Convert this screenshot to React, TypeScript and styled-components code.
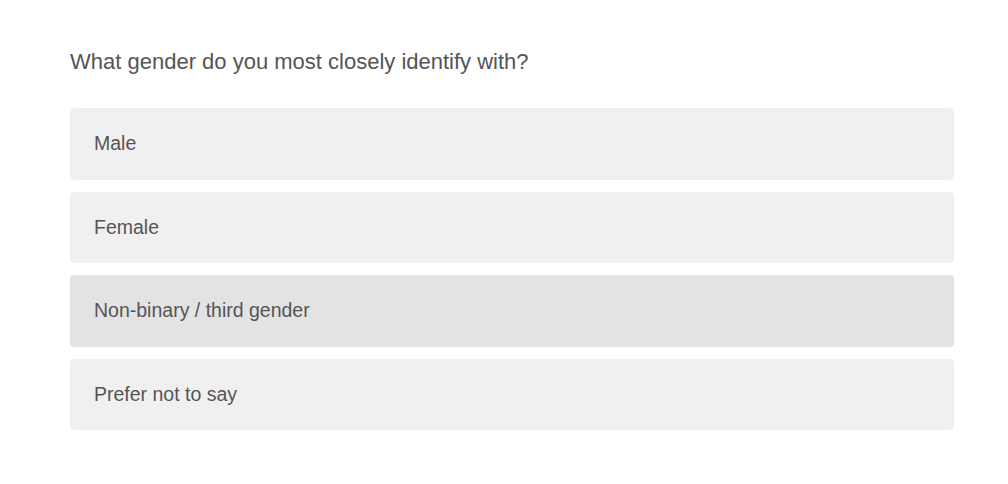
import styled, { createGlobalStyle } from 'styled-components'

const GlobalStyle = createGlobalStyle`
  body {
    margin: 0;
    background: #ffffff;
    font-family: 'Liberation Sans', Arial, Helvetica, sans-serif;
  }
`

const Page = styled.div`
  padding: 47px 54px 0 70px;
`

const Question = styled.div`
  font-size: 22px;
  line-height: 30px;
  color: #555555;
  margin-bottom: 31px;
`

const OptionList = styled.div`
  display: flex;
  flex-direction: column;
  gap: 12px;
`

const Option = styled.div<{ $hover?: boolean }>`
  height: 71.5px;
  display: flex;
  align-items: center;
  padding: 0 24px;
  border-radius: 4px;
  background-color: ${(p) => (p.$hover ? '#e3e3e3' : '#f0f0f0')};
  font-size: 19.5px;
  color: #555555;
  cursor: pointer;
`

const options = ['Male', 'Female', 'Non-binary / third gender', 'Prefer not to say']

function App() {
  return (
    <>
      <GlobalStyle />
      <Page>
        <Question>What gender do you most closely identify with?</Question>
        <OptionList>
          {options.map((o, i) => (
            <Option key={o} $hover={i === 2}>
              {o}
            </Option>
          ))}
        </OptionList>
      </Page>
    </>
  )
}

export default App
